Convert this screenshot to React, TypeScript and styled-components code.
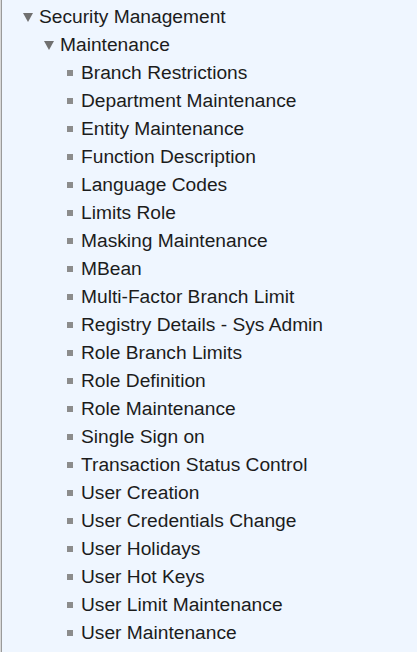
import React from "react";
import styled, { createGlobalStyle } from "styled-components";

const Global = createGlobalStyle`
  html, body { margin: 0; padding: 0; background: #eff6ff; }
  body { font-family: "Liberation Sans", Arial, sans-serif; }
`;

const Panel = styled.div`
  box-sizing: border-box;
  width: 417px;
  height: 652px;
  overflow: hidden;
  background: #eff6ff;
  border-left: 1px solid #d8d8d8;
  box-shadow: inset 1px 0 0 #9a9a9a;
  padding-top: 3px;
`;

const List = styled.ul`
  list-style: none;
  margin: 0;
  padding: 0;
`;

const Row = styled.li<{ $level: number }>`
  display: flex;
  align-items: center;
  height: 28px;
  padding-left: ${(p) => 21 + p.$level * 21}px;
  font-size: 19.2px;
  color: #1c1c1c;
  white-space: nowrap;
`;

const Marker = styled.span`
  width: 17px;
  height: 28px;
  flex: none;
  display: flex;
  align-items: center;
`;

const Caret = styled.span`
  width: 0;
  height: 0;
  border-left: 5px solid transparent;
  border-right: 5px solid transparent;
  border-top: 9px solid #707070;
  margin-left: 1px;
`;

const Square = styled.span`
  width: 6px;
  height: 6px;
  background: #8c8c8c;
  margin-left: 3px;
`;

const items = [
  "Branch Restrictions",
  "Department Maintenance",
  "Entity Maintenance",
  "Function Description",
  "Language Codes",
  "Limits Role",
  "Masking Maintenance",
  "MBean",
  "Multi-Factor Branch Limit",
  "Registry Details - Sys Admin",
  "Role Branch Limits",
  "Role Definition",
  "Role Maintenance",
  "Single Sign on",
  "Transaction Status Control",
  "User Creation",
  "User Credentials Change",
  "User Holidays",
  "User Hot Keys",
  "User Limit Maintenance",
  "User Maintenance",
];

export default function App() {
  return (
    <>
      <Global />
      <Panel>
        <List>
          <Row $level={0}>
            <Marker><Caret /></Marker>Security Management
          </Row>
          <Row $level={1}>
            <Marker><Caret /></Marker>Maintenance
          </Row>
          {items.map((t) => (
            <Row key={t} $level={2}>
              <Marker><Square /></Marker>{t}
            </Row>
          ))}
        </List>
      </Panel>
    </>
  );
}
